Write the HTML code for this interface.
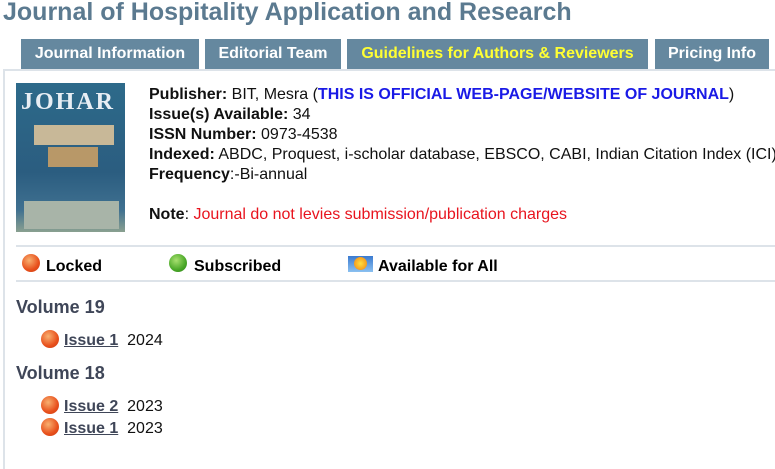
<!DOCTYPE html>
<html><head><style>
*{margin:0;padding:0;box-sizing:border-box}
body{width:775px;height:442px;overflow:hidden;background:#fff;font-family:"Liberation Sans",Arial,sans-serif;position:relative}
.abs{position:absolute;white-space:nowrap}
h1{position:absolute;left:3px;top:-2px;font-size:25px;font-weight:bold;color:#5b7a90;white-space:nowrap}
.tab{position:absolute;top:39px;height:30px;background:#65889f;color:#fff;font-weight:bold;font-size:16px;line-height:30px;text-align:center}
.box{position:absolute;left:3px;top:69px;width:800px;height:400px;border-left:2px solid #dde3e9;border-top:2px solid #dde3e9}
.t{position:absolute;left:149px;font-size:16px;color:#111;white-space:nowrap}
b{color:#111}
.hr{position:absolute;left:16px;width:770px;height:2px;background:#dde3e9}
.ball{position:absolute;width:18px;height:18px;border-radius:50%;background:radial-gradient(circle at 40% 35%,#f8b070,#e8501c 60%,#c83a10)}
.vol{position:absolute;left:16px;font-size:18px;font-weight:bold;color:#3f4658}
.iss{position:absolute;left:64px;font-size:16px;white-space:nowrap;color:#111}
.iss a{color:#3f4658;font-weight:bold;text-decoration:underline}
</style></head><body>
<h1>Journal of Hospitality Application and Research</h1>
<div class="tab" style="left:21px;width:178px">Journal Information</div>
<div class="tab" style="left:205px;width:136px">Editorial Team</div>
<div class="tab" style="left:347px;width:301px;color:#ffff33">Guidelines for Authors &amp; Reviewers</div>
<div class="tab" style="left:655px;width:114px">Pricing Info</div>
<div class="box"></div>
<div class="abs" style="left:16px;top:83px;width:109px;height:149px;background:linear-gradient(#2d6a8a,#2b5d80 60%,#3f7090 85%,#8aa090)">
<div style="color:#e8eef4;font-family:'Liberation Serif',serif;font-size:24px;font-weight:bold;letter-spacing:2px;position:absolute;left:5px;top:6px">JOHAR</div>
<div style="position:absolute;left:18px;top:42px;width:80px;height:20px;background:#c8b898"></div>
<div style="position:absolute;left:32px;top:64px;width:50px;height:20px;background:#b89868"></div>
<div style="position:absolute;left:8px;top:118px;width:95px;height:28px;background:#a8b4a8"></div>
</div>
<div class="t" style="top:86px"><b>Publisher:</b> BIT, Mesra (<b style="color:#1a1ae6">THIS IS OFFICIAL WEB-PAGE/WEBSITE OF JOURNAL</b>)</div>
<div class="t" style="top:106px"><b>Issue(s) Available:</b> 34</div>
<div class="t" style="top:126px"><b>ISSN Number:</b> 0973-4538</div>
<div class="t" style="top:146px"><b>Indexed:</b> ABDC, Proquest, i-scholar database, EBSCO, CABI, Indian Citation Index (ICI)</div>
<div class="t" style="top:166px"><b>Frequency</b>:-Bi-annual</div>
<div class="t" style="top:206px"><b>Note</b>: <span style="color:#e8141e">Journal do not levies submission/publication charges</span></div>
<div class="hr" style="top:245px"></div>
<div class="ball" style="left:22px;top:254px"></div>
<div class="abs" style="left:46px;top:258px;font-size:16px;font-weight:bold">Locked</div>
<div class="ball" style="left:169px;top:254px;background:radial-gradient(circle at 40% 35%,#a8e070,#4aa828 60%,#2a8018)"></div>
<div class="abs" style="left:194px;top:258px;font-size:16px;font-weight:bold">Subscribed</div>
<div class="abs" style="left:348px;top:256px;width:25px;height:16px;background:linear-gradient(#3a7ad0,#8ac0f0)"><div style="position:absolute;left:6px;top:1px;width:13px;height:13px;border-radius:50%;background:radial-gradient(#ffe040,#f08010)"></div></div>
<div class="abs" style="left:378px;top:258px;font-size:16px;font-weight:bold">Available for All</div>
<div class="hr" style="top:280px"></div>
<div class="vol" style="top:297px">Volume 19</div>
<div class="ball" style="left:41px;top:330px"></div>
<div class="iss" style="top:332px"><a>Issue 1</a>&nbsp; 2024</div>
<div class="vol" style="top:363px">Volume 18</div>
<div class="ball" style="left:41px;top:396px"></div>
<div class="iss" style="top:398px"><a>Issue 2</a>&nbsp; 2023</div>
<div class="ball" style="left:41px;top:418px"></div>
<div class="iss" style="top:420px"><a>Issue 1</a>&nbsp; 2023</div>
</body></html>
